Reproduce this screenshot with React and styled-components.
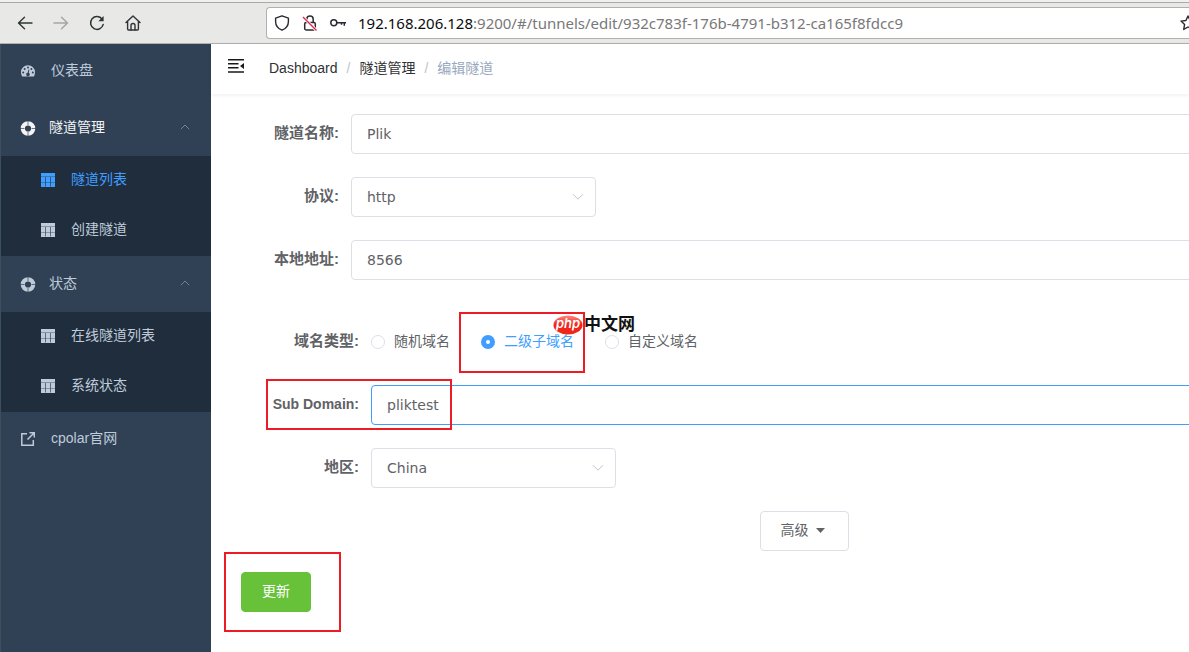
import React from 'react'
import styled, { createGlobalStyle } from 'styled-components'

const MENU = [
  { label: '仪表盘', icon: 'gauge' },
  {
    label: '隧道管理',
    icon: 'ring',
    open: true,
    children: [{ label: '隧道列表', active: true }, { label: '创建隧道' }],
  },
  {
    label: '状态',
    icon: 'ring',
    children: [{ label: '在线隧道列表' }, { label: '系统状态' }],
  },
  { label: 'cpolar官网', icon: 'external' },
]

const DOMAIN_TYPES = ['随机域名', '二级子域名', '自定义域名']

export default function App() {
  const [domainType, setDomainType] = React.useState('二级子域名')

  return (
    <Window>
      <GlobalStyle />
      <Toolbar>
        <NavIcons>
          <ToolButton aria-label="Back"><BackIcon /></ToolButton>
          <ToolButton aria-label="Forward" disabled><ForwardIcon /></ToolButton>
          <ToolButton aria-label="Reload"><ReloadIcon /></ToolButton>
          <ToolButton aria-label="Home"><HomeIcon /></ToolButton>
        </NavIcons>
        <AddressBar>
          <ShieldIcon />
          <LockIcon />
          <KeyIcon />
          <Url><b>192.168.206.128</b>:9200/#/tunnels/edit/932c783f-176b-4791-b312-ca165f8fdcc9</Url>
          <StarIcon />
        </AddressBar>
      </Toolbar>
      <Body>
        <Sidebar>
          {MENU.map((item) => (
            <div key={item.label}>
              <MenuItem href="#" $open={item.open} $group={!!item.children}>
                <MenuIcon name={item.icon} />
                <span>{item.label}</span>
                {item.children && <ChevronUp />}
              </MenuItem>
              {item.children && (
                <SubMenu>
                  {item.children.map((child) => (
                    <SubItem href="#" key={child.label} $active={child.active}>
                      <TableIcon />
                      <span>{child.label}</span>
                    </SubItem>
                  ))}
                </SubMenu>
              )}
            </div>
          ))}
        </Sidebar>
        <Main>
          <Navbar>
            <FoldButton aria-label="Toggle menu"><FoldIcon /></FoldButton>
            <Breadcrumb>
              <a href="#">Dashboard</a>
              <i>/</i>
              <a href="#">隧道管理</a>
              <i>/</i>
              <span>编辑隧道</span>
            </Breadcrumb>
          </Navbar>
          <Form onSubmit={(e) => e.preventDefault()}>
            <Fields>
              <Field>
                <Label htmlFor="name">隧道名称:</Label>
                <Input id="name" defaultValue="Plik" />
              </Field>
              <Field>
                <Label htmlFor="protocol">协议:</Label>
                <SelectBox>
                  <Select id="protocol" defaultValue="http">
                    <option>http</option>
                    <option>tcp</option>
                  </Select>
                  <ChevronDown />
                </SelectBox>
              </Field>
              <Field>
                <Label htmlFor="addr">本地地址:</Label>
                <Input id="addr" defaultValue="8566" />
              </Field>
            </Fields>
            <Fields $nested>
              <Field>
                <Label as="span" id="domain-type">域名类型:</Label>
                <RadioGroup role="radiogroup" aria-labelledby="domain-type">
                  {DOMAIN_TYPES.map((type) => (
                    <RadioLabel key={type} $checked={type === domainType}>
                      <Radio
                        type="radio"
                        name="domainType"
                        checked={type === domainType}
                        onChange={() => setDomainType(type)}
                      />
                      <span>{type}</span>
                      {type === '二级子域名' && <RadioMark />}
                    </RadioLabel>
                  ))}
                  <Watermark>
                    <PhpLogo />
                    <span>中文网</span>
                  </Watermark>
                </RadioGroup>
              </Field>
              <Field>
                <Label htmlFor="sub" $latin>Sub Domain:</Label>
                <Input id="sub" defaultValue="pliktest" $focused />
                <SubDomainMark />
              </Field>
              <Field>
                <Label htmlFor="region">地区:</Label>
                <SelectBox>
                  <Select id="region" defaultValue="China">
                    <option>China</option>
                    <option>United States</option>
                  </Select>
                  <ChevronDown />
                </SelectBox>
              </Field>
            </Fields>
            <Advanced>
              <Button type="button">高级 <Caret /></Button>
            </Advanced>
            <Submit>
              <Button type="submit" $success>更新</Button>
              <SubmitMark />
            </Submit>
          </Form>
        </Main>
      </Body>
    </Window>
  )
}

/* icons */

const BackIcon = () => (
  <svg width="16" height="16" viewBox="0 0 16 16" fill="none" stroke="currentColor" strokeWidth="1.4" strokeLinecap="round" strokeLinejoin="round">
    <path d="M1.5 8H15M7.5 2.2 1.5 8l6 5.8" />
  </svg>
)

const ForwardIcon = () => (
  <svg width="16" height="16" viewBox="0 0 16 16" fill="none" stroke="currentColor" strokeWidth="1.4" strokeLinecap="round" strokeLinejoin="round">
    <path d="M1 8h13.5M8.5 2.2l6 5.8-6 5.8" />
  </svg>
)

const ReloadIcon = () => (
  <svg width="16" height="16" viewBox="0 0 16 16" fill="none" stroke="currentColor" strokeWidth="1.5" strokeLinecap="round">
    <path d="M13.2 4.3A6.4 6.4 0 1 0 14.2 9.4" />
    <path d="M14.6 1v5.2H9.4z" fill="currentColor" stroke="none" />
  </svg>
)

const HomeIcon = () => (
  <svg width="16" height="16" viewBox="0 0 16 16" fill="none" stroke="currentColor" strokeWidth="1.4" strokeLinecap="round" strokeLinejoin="round">
    <path d="M1 7.6 8 1l7 6.6M2.6 6.5V14a1 1 0 0 0 1 1h8.8a1 1 0 0 0 1-1V6.5" />
    <path d="M6 15v-4.5a2 2 0 0 1 4 0V15" />
  </svg>
)

const ShieldIcon = () => (
  <svg width="16" height="16" viewBox="0 0 16 16" fill="none" stroke="#2b2a33" strokeWidth="1.4" strokeLinejoin="round">
    <path d="M8 .8 14.4 3.2V6.5c0 4-2.6 7.2-6.4 8.7C4.2 13.7 1.6 10.5 1.6 6.5V3.2z" />
  </svg>
)

const LockIcon = () => (
  <svg width="16" height="16" viewBox="0 0 16 16" fill="none" stroke="#2b2a33" strokeWidth="1.5">
    <rect x="2.7" y="7.5" width="10.6" height="7.5" rx="1.4" />
    <path d="M4.8 7.5V4.3a3.2 3.2 0 0 1 6.4 0v3.2" />
    <path d="M1 2 14.5 15.5" stroke="#fff" strokeWidth="3" />
    <path d="M1 2 14.5 15.5" stroke="#e22850" strokeWidth="1.4" />
  </svg>
)

const KeyIcon = () => (
  <svg width="16" height="16" viewBox="0 0 16 16" fill="none" stroke="#2b2a33" strokeWidth="1.5">
    <circle cx="3.8" cy="7.8" r="3" />
    <path d="M7 7.8h9M14.3 7.8v3M11.5 7.8v2" />
  </svg>
)

const StarIcon = () => (
  <svg width="16" height="16" viewBox="0 0 16 16" fill="none" stroke="#2b2a33" strokeWidth="1.4" strokeLinejoin="round">
    <path d="M8 1l2.1 4.5 4.9.6-3.6 3.4.9 4.9L8 12l-4.3 2.4.9-4.9L1 6.1l4.9-.6z" />
  </svg>
)

const GaugeIcon = () => (
  <svg width="14" height="14" viewBox="0 0 14 14" fill="currentColor">
    <path d="M7 1.3a7 7 0 0 0-7 7c0 1.600.4 3 1.200 4.200h11.600A7.700 7.700 0 0 0 14 8.300a7 7 0 0 0-7-7z" />
    <g fill="#304156">
      <circle cx="2.2" cy="8.5" r="1" />
      <circle cx="3.6" cy="5" r="1" />
      <circle cx="7" cy="3.5" r="1" />
      <circle cx="10.4" cy="5" r="1" />
      <circle cx="11.8" cy="8.5" r="1" />
      <path d="M7.500 5.500l.9.2-.6 3.300a1.700 1.700 0 1 1-1.100-.2z" />
    </g>
  </svg>
)

const RingIcon = () => (
  <svg width="16" height="16" viewBox="0 0 16 16" fill="none">
    <circle cx="8" cy="8.5" r="5.2" stroke="currentColor" strokeWidth="4.2" />
    <path d="M8 1v4M8 12v4M0 8.5h4.5M11.5 8.5H16" stroke="#304156" strokeOpacity=".7" />
  </svg>
)

const ExternalIcon = () => (
  <svg width="14" height="14" viewBox="0 0 14 14" fill="none" stroke="currentColor" strokeWidth="1.5">
    <path d="M6 1.8H.8v11.5h11.5V8M8.5.8h4.8v4.8M13 1 6.5 7.5" />
  </svg>
)

const TableIcon = () => (
  <svg width="14" height="14" viewBox="0 0 14 14">
    <path d="M0 0h14v14H0z" fill="currentColor" />
    <path d="M0 3.5h14M0 9.5h14" stroke="#1f2d3d" strokeOpacity=".35" />
    <path d="M4.5 4v9.5M9.5 4v9.5" stroke="#1f2d3d" strokeOpacity=".6" />
  </svg>
)

const MenuIcon = ({ name }) => {
  if (name === 'gauge') return <GaugeIcon />
  if (name === 'external') return <ExternalIcon />
  return <RingIcon />
}

const ChevronUp = () => (
  <svg width="10" height="6" viewBox="0 0 10 6" fill="none" stroke="#75818f">
    <path d="M.8 5.2 5 1l4.2 4.2" />
  </svg>
)

const ChevronDown = () => (
  <svg width="12" height="8" viewBox="0 0 12 8" fill="none" stroke="#c0c4cc">
    <path d="M1 1.2 6 6.2l5-5" />
  </svg>
)

const FoldIcon = () => (
  <svg width="16" height="14" viewBox="0 0 16 14" fill="#1a1a1a">
    <path d="M0 0h16v1.5H0zM0 4h10.5v1.5H0zM0 8h10.5v1.5H0zM0 12.3h16v1.5H0zM16 4v6l-4-3z" />
  </svg>
)

const Caret = () => (
  <svg width="14" height="6" viewBox="0 0 14 6" fill="#606266">
    <path d="M2 1h9L6.5 6z" />
  </svg>
)

const PhpLogo = () => (
  <svg width="30" height="20" viewBox="0 0 30 20">
    <defs>
      <linearGradient id="php" x1="0" y1="0" x2="0" y2="1">
        <stop offset="0" stopColor="#ff8a80" />
        <stop offset=".5" stopColor="#f0221c" />
        <stop offset="1" stopColor="#f0281c" />
      </linearGradient>
    </defs>
    <ellipse cx="15" cy="10" rx="14.5" ry="9.5" fill="url(#php)" />
    <text x="15" y="13" textAnchor="middle" fontFamily="Inter, sans-serif" fontSize="13" fontStyle="italic" fontWeight="600" fill="#fff">php</text>
  </svg>
)

/* styles */

const GlobalStyle = createGlobalStyle`
  *, *::before, *::after {
    box-sizing: border-box;
  }
  body {
    margin: 0;
    color: #606266;
    font-family: "Liberation Sans", "Noto Sans CJK SC", sans-serif;
    font-size: 14px;
    line-height: 20px;
  }
  a {
    color: inherit;
    text-decoration: none;
  }
  svg {
    flex: none;
  }
`

const Window = styled.div`
  display: flex;
  flex-direction: column;
  min-height: 100vh;
  overflow: hidden;
`

const Toolbar = styled.div`
  display: flex;
  align-items: center;
  height: 44px;
  background: #e8e8e6;
  border-top: 2px solid #f0f0f0;
  border-bottom: 1px solid #b0b0ae;
  box-shadow: inset 0 1px #a9a9a7;
`

const NavIcons = styled.div`
  display: flex;
  gap: 20px;
  width: 266px;
  padding-left: 17px;
  flex: none;
`

const ToolButton = styled.button`
  display: flex;
  padding: 0;
  border: 0;
  background: none;
  color: ${(p) => (p.disabled ? '#a5a5a4' : '#2e3436')};
`

const AddressBar = styled.div`
  flex: 1;
  display: flex;
  align-items: center;
  gap: 12px;
  height: 32px;
  margin-right: -7px;
  padding-left: 7px;
  background: #fff;
  border: 1px solid #b0b0ae;
  border-right: 0;
  border-radius: 4px 0 0 4px;
`

const Url = styled.span`
  flex: 1;
  color: #787878;
  font-family: "Noto Sans", sans-serif;
  font-size: 15px;
  white-space: nowrap;

  b {
    color: #0c0c0d;
    font-weight: 400;
  }
`

const Body = styled.div`
  flex: 1;
  display: flex;
`

const Sidebar = styled.nav`
  flex: none;
  width: 211px;
  background: #304156;
  border-left: 1px solid #3b4f5c;
`

const MenuItem = styled.a`
  display: flex;
  align-items: center;
  gap: ${(p) => (p.$group ? '13px' : '16px')};
  height: 56px;
  padding: ${(p) => (p.$group ? '0 21px 0 19px' : '0 20px 2px 20px')};
  color: ${(p) => (p.$open ? '#f4f4f5' : '#bfcbd9')};

  span {
    flex: 1;
    padding-bottom: 2px;
  }
  svg:last-child {
    margin-bottom: 2px;
  }
`

const SubMenu = styled.div`
  background: #1f2d3d;
`

const SubItem = styled.a`
  display: flex;
  align-items: center;
  gap: 16px;
  height: 50px;
  padding: 0 20px 2px 40px;
  color: ${(p) => (p.$active ? '#409eff' : '#bfcbd9')};

  span {
    padding-bottom: 2px;
  }
`

const Main = styled.main`
  flex: 1;
  min-width: 0;
  background: #fff;
`

const Navbar = styled.header`
  display: flex;
  align-items: center;
  height: 50px;
  padding-left: 17px;
  box-shadow: 0 1px 4px rgba(0, 21, 41, 0.08);
`

const FoldButton = styled.button`
  display: flex;
  padding: 0 0 6px;
  border: 0;
  background: none;
`

const Breadcrumb = styled.nav`
  display: flex;
  margin-left: 25px;
  padding-bottom: 2px;
  color: #303133;

  i {
    margin: 0 9px 0 9px;
    color: #c0c4cc;
    font-style: normal;
  }
  span {
    color: #97a8be;
  }
`

/* the form is wider than the window, its right side runs out of view */
const Form = styled.form`
  width: calc(100% + 208px);
  padding: 20px 30px;
`

const Fields = styled.div`
  display: flex;
  flex-direction: column;
  gap: 23px;
  padding-left: ${(p) => (p.$nested ? '20px' : '0')};
  margin-bottom: ${(p) => (p.$nested ? '23px' : '42px')};
`

const Field = styled.div`
  position: relative;
  display: flex;
  align-items: center;
  min-height: 40px;
`

const Label = styled.label`
  width: 110px;
  padding: 0 12px 3px 0;
  font-size: ${(p) => (p.$latin ? '14px' : '15px')};
  font-weight: 700;
  text-align: right;
  white-space: nowrap;
`

const Input = styled.input`
  flex: 1;
  height: 40px;
  padding: 0 15px;
  border: 1px solid ${(p) => (p.$focused ? '#409eff' : '#dcdfe6')};
  border-radius: 4px;
  color: #606266;
  font-family: "DejaVu Sans", sans-serif;
  font-size: 14px;
  outline: none;
`

const SelectBox = styled.div`
  position: relative;
  width: 245px;

  svg {
    position: absolute;
    top: 16px;
    right: 12px;
    pointer-events: none;
  }
`

const Select = styled.select`
  width: 100%;
  height: 40px;
  padding: 0 30px 0 15px;
  appearance: none;
  background: #fff;
  border: 1px solid #dcdfe6;
  border-radius: 4px;
  color: #606266;
  font-family: "DejaVu Sans", sans-serif;
  font-size: 14px;
`

const RadioGroup = styled.div`
  position: relative;
  display: flex;
  gap: 31px;
`

const RadioLabel = styled.label`
  position: relative;
  display: flex;
  align-items: center;
  gap: 9px;
  color: ${(p) => (p.$checked ? '#409eff' : '#606266')};

  span {
    padding-bottom: 2px;
  }
`

const Radio = styled.input`
  width: 14px;
  height: 14px;
  margin: 0;
  appearance: none;
  background: #fff;
  border: 1px solid #dcdfe6;
  border-radius: 50%;

  &:checked {
    border: 5px solid #409eff;
  }
`

const Button = styled.button`
  display: inline-flex;
  align-items: center;
  gap: 5px;
  height: 40px;
  padding: 0 20px 2px;
  background: ${(p) => (p.$success ? '#67c23a' : '#fff')};
  border: 1px solid ${(p) => (p.$success ? '#67c23a' : '#dcdfe6')};
  border-radius: 4px;
  color: ${(p) => (p.$success ? '#fff' : '#606266')};
  font-family: inherit;
  font-size: 14px;
  line-height: 20px;
`

const Advanced = styled.div`
  display: flex;
  justify-content: center;
  margin-bottom: 21px;
`

const Submit = styled.div`
  position: relative;
  display: inline-flex;
`

/* red frames drawn over the page */
const Mark = styled.div`
  position: absolute;
  border: 2px solid #ed1c24;
  pointer-events: none;
`

const RadioMark = styled(Mark)`
  inset: -19px -11px -20px -22px;
`

const SubDomainMark = styled(Mark)`
  top: -6px;
  left: 5px;
  width: 186px;
  height: 51px;
`

const SubmitMark = styled(Mark)`
  inset: -20px -30px -20px -17px;
`

const Watermark = styled.div`
  position: absolute;
  top: -16px;
  left: 182px;
  display: flex;
  align-items: center;
  gap: 1px;
  color: #111;
  font-size: 17px;
  font-weight: 700;
  line-height: 20px;
  white-space: nowrap;
`
